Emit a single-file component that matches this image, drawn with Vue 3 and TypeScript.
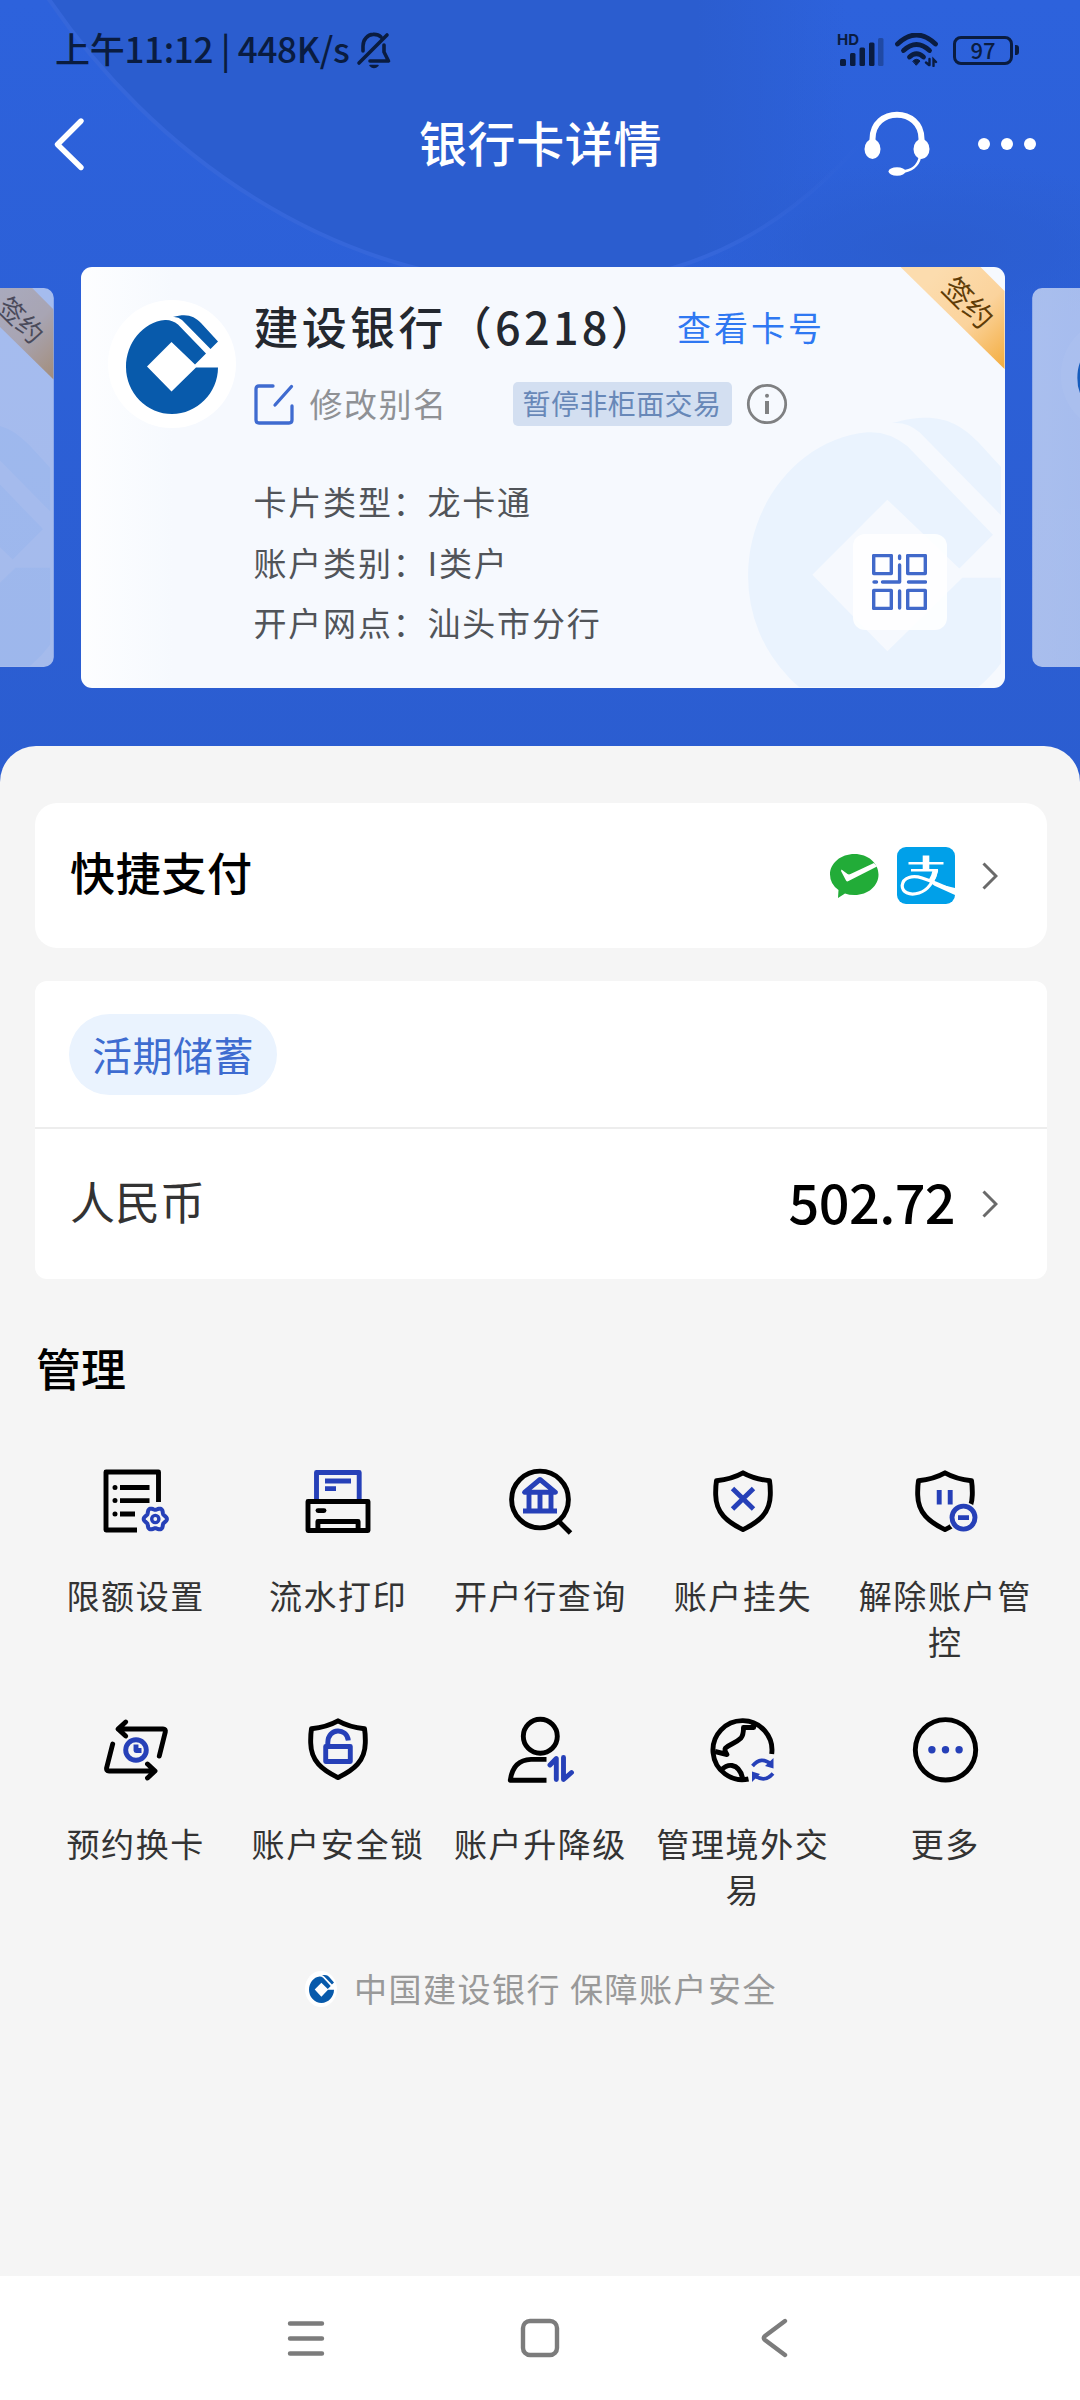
<script setup lang="ts">
interface Field {
  label: string
  value: string
}

interface Action {
  icon: string
  label: string
}

const fields: Field[] = [
  { label: '卡片类型', value: '龙卡通' },
  { label: '账户类别', value: 'I类户' },
  { label: '开户网点', value: '汕头市分行' },
]

const actions: Action[] = [
  { icon: 'limit', label: '限额设置' },
  { icon: 'print', label: '流水打印' },
  { icon: 'branch', label: '开户行查询' },
  { icon: 'loss', label: '账户挂失' },
  { icon: 'release', label: '解除账户管控' },
  { icon: 'renew', label: '预约换卡' },
  { icon: 'lock', label: '账户安全锁' },
  { icon: 'upgrade', label: '账户升降级' },
  { icon: 'overseas', label: '管理境外交易' },
  { icon: 'more', label: '更多' },
]

const logoBody =
  'M219 367.5H197L172.5 391.5L148 366.5L172.5 342L196 364.5L207 353.5L179 324.5Q173 319.6 166 320C144 322 127 343 127 367A46 47 0 0 0 173 414C198 414 219 393 219 367.5Z'
const logoWing = 'M174 317C188 313 195 316 202 323L219 341.5L211.5 349L183 320Q179 316.5 174 317Z'

const shield =
  'M36 7.8Q25 14 9.5 15.7Q8.5 22 8.7 30C9 48 20 57 36 64.6C52 57 63 48 63.3 30Q63.5 22 62.5 15.7Q47 14 36 7.8Z'

function gearPath(cx: number, cy: number): string {
  const points: string[] = []
  for (let i = 0; i < 72; i++) {
    const a = (i * Math.PI) / 36
    const r = 10.4 + 1.2 * Math.cos(6 * a)
    points.push(`${(cx + r * Math.cos(a)).toFixed(2)} ${(cy + r * Math.sin(a)).toFixed(2)}`)
  }
  return `M${points.join('L')}Z`
}
const gear = gearPath(55.3, 54)
</script>

<template>
  <div class="screen">
    <header class="hero">
      <svg class="hero-bg" width="1080" height="790" viewBox="0 0 1080 790">
        <defs>
          <linearGradient id="base" x1="0" y1="0" x2="0" y2="1">
            <stop offset="0" stop-color="#2d62dc" />
            <stop offset="1" stop-color="#2b5dd0" />
          </linearGradient>
          <linearGradient id="disc" x1="0" y1="0" x2="1" y2="0">
            <stop offset="0" stop-color="#2b5dcf" />
            <stop offset="0.78" stop-color="#2b5dcf" />
            <stop offset="0.96" stop-color="#2b5dcf" stop-opacity="0" />
          </linearGradient>
          <linearGradient id="rim" x1="0" y1="0" x2="1" y2="0">
            <stop offset="0" stop-color="#3566da" />
            <stop offset="0.8" stop-color="#3566da" />
            <stop offset="0.98" stop-color="#3566da" stop-opacity="0" />
          </linearGradient>
          <radialGradient id="shade">
            <stop offset="0" stop-color="#2b5dcf" />
            <stop offset="1" stop-color="#2b5dcf" stop-opacity="0" />
          </radialGradient>
        </defs>
        <rect width="1080" height="790" fill="url(#base)" />
        <ellipse cx="930" cy="250" rx="250" ry="90" fill="url(#shade)" />
        <path d="M46 -5C150 150 330 285 550 285C700 285 800 220 880 120V-5Z" fill="url(#disc)" />
        <path d="M46 -5C150 150 330 285 550 285C700 285 800 220 880 120" fill="none" stroke="url(#rim)" stroke-width="4" />
      </svg>

      <div class="status">
        <span class="status-text">上午11:12 | 448K/s</span>
        <svg class="bell" width="36" height="38" viewBox="0 0 36 38" fill="none" stroke="#0a1c40" stroke-width="3.6" stroke-linecap="round" stroke-linejoin="round">
          <path d="M3 32L31 4" />
          <path d="M7 20V15C7 8 12 3.6 17 3.4C20 3.2 23 4 25 6" />
          <path d="M28 14V21L32.500 30H14" />
          <path d="M14 34.500H22Q18 38.500 14 34.500Z" fill="#0a1c40" stroke-width="1.500" />
        </svg>
        <div class="status-right">
          <svg class="signal" width="50" height="34" viewBox="0 0 50 34" fill="#0a1c40">
            <text x="0" y="12" font-size="15" font-weight="700" class="hd">HD</text>
            <rect x="3" y="26" width="6" height="7" rx="1.500" />
            <rect x="13" y="20" width="5.500" height="13" rx="1.500" />
            <rect x="22.500" y="14.500" width="5.500" height="18.500" rx="1.500" />
            <rect x="32" y="9.500" width="5.500" height="23.500" rx="1.500" />
            <rect x="41" y="5" width="5.500" height="28" rx="1.500" opacity="0.35" />
          </svg>
          <svg class="wifi" width="44" height="34" viewBox="0 0 44 34" fill="none" stroke="#0a1c40" stroke-width="4.800" stroke-linecap="round">
            <path d="M2.500 11Q21.500 -7 40.500 11" />
            <path d="M8.500 17.500Q21.500 5.500 34.500 17.500" />
            <path d="M14.500 24Q21.500 17.500 28.500 24" />
            <path d="M18 28Q21.500 24.500 25 28L21.500 32Z" fill="#0a1c40" stroke-width="1" />
            <path d="M34.500 26V32M31 29.500L34 32M38.500 33V26.500L41 29" stroke-width="2.400" />
          </svg>
          <div class="battery"><span>97</span></div>
          <i class="battery-cap"></i>
        </div>
      </div>

      <nav class="titlebar">
        <svg class="back" width="34" height="56" viewBox="0 0 34 56" fill="none" stroke="#fff" stroke-width="5.400" stroke-linecap="round" stroke-linejoin="round">
          <path d="M29 5L5.500 28.500L29 51.500" />
        </svg>
        <h1>银行卡详情</h1>
        <svg class="headset" width="66" height="66" viewBox="0 0 66 66" fill="none" stroke="#fff">
          <path d="M8.500 32V28C8.500 -4.500 57.500 -4.500 57.500 28V32" stroke-width="6" />
          <ellipse cx="8.500" cy="38" rx="8" ry="10" fill="#fff" stroke="none" />
          <ellipse cx="57.500" cy="38" rx="8" ry="10" fill="#fff" stroke="none" />
          <path d="M56 46C54 55 47 60 38 60.500" stroke-width="2.600" />
          <ellipse cx="33" cy="60.500" rx="8.500" ry="4.200" fill="#fff" stroke="none" />
        </svg>
        <svg class="dots" width="60" height="14" viewBox="0 0 60 14" fill="#fff">
          <circle cx="7" cy="7" r="6" /><circle cx="30" cy="7" r="6" /><circle cx="53" cy="7" r="6" />
        </svg>
      </nav>

      <section class="carousel">
        <article class="card side">
          <svg class="watermark" width="253" height="270" viewBox="127 315 82.600 88.200">
            <path :d="logoBody" /><path :d="logoWing" />
          </svg>
          <div class="ribbon"><span>签约</span></div>
        </article>

        <article class="card">
          <svg class="watermark" width="253" height="270" viewBox="127 315 82.600 88.200">
            <path :d="logoBody" /><path :d="logoWing" />
          </svg>
          <div class="ribbon"><span>签约</span></div>
          <div class="avatar">
            <svg width="92" height="99" viewBox="127 315 92 99"><path :d="logoBody" /><path :d="logoWing" /></svg>
          </div>
          <div class="details">
            <div class="name-row">
              <h2>建设银行（6218）</h2>
              <a>查看卡号</a>
            </div>
            <div class="alias-row">
              <svg width="40" height="41" viewBox="0 0 40 41" fill="none" stroke="#3f6bd0" stroke-width="3.300" stroke-linecap="round" stroke-linejoin="round">
                <path d="M19 2H5Q2 2 2 5V36Q2 39 5 39H35Q38 39 38 36V22" />
                <path d="M21 21L37.500 2.500" />
              </svg>
              <span class="alias">修改别名</span>
              <span class="tag">暂停非柜面交易</span>
              <svg class="info" width="42" height="42" viewBox="0 0 42 42" fill="none" stroke="#7f8082">
                <circle cx="21" cy="21" r="18.700" stroke-width="2.800" />
                <path d="M21 18V31" stroke-width="4" />
                <circle cx="21" cy="12.700" r="2" fill="#7f8082" stroke="none" />
              </svg>
            </div>
            <dl>
              <div v-for="f in fields" :key="f.label" class="field">
                <dt>{{ f.label }}：</dt>
                <dd>{{ f.value }}</dd>
              </div>
            </dl>
          </div>
          <div class="qr">
            <svg width="55" height="56" viewBox="0 0 55 56" fill="none" stroke="#4169ca" stroke-width="3.400" stroke-linecap="round" stroke-linejoin="round">
              <rect x="1.700" y="1.600" width="17.600" height="18" />
              <rect x="35.700" y="1.600" width="17.600" height="18" />
              <rect x="1.700" y="36.400" width="17.600" height="18" />
              <rect x="35.700" y="36.400" width="17.600" height="18" />
              <path d="M27.600 2V4.500M27.600 11V28H10.500M2 28H4.500M36.500 28H53.500M27.600 37V54" />
            </svg>
          </div>
        </article>

        <article class="card side">
          <div class="avatar">
            <svg width="92" height="99" viewBox="127 315 92 99"><path :d="logoBody" /><path :d="logoWing" /></svg>
          </div>
        </article>
      </section>
    </header>

    <main class="panel">
      <section class="quick">
        <span>快捷支付</span>
        <div class="pay-icons">
          <svg class="wechat" width="49" height="44" viewBox="0 0 49 44">
            <path d="M24.500 0C38 0 48.500 9 48.500 20.500S38 41 24.500 41Q19 41 15 39.500L8 44L8.500 36Q0 30 0 20.500C0 9 11 0 24.500 0Z" fill="#22ac38" />
            <path d="M11.500 15.500L17.500 20Q19 20.800 20.500 20L44 9L47 12.500L18.500 27Q17 28 16 26.500L11 17Z" fill="#fff" />
          </svg>
          <svg class="alipay" width="58" height="57" viewBox="0 0 58 57">
            <rect width="58" height="57" rx="9" fill="#00a0e9" />
            <g fill="none" stroke="#fff">
              <path d="M11.500 16.200H46.500M14 23.200H41" stroke-width="2.600" />
              <path d="M29 8.500V23" stroke-width="6.600" />
              <path d="M39.500 23Q35 42 22 46C12 49 5 45 5.200 38.500C6 30 16 28 25 31Q36 34.500 58 44.500" stroke-width="3.200" />
              <path d="M38.500 23Q37.500 29 34 34.500" stroke-width="5.500" />
              <path d="M32 33.500Q37 36 41 38L58 42V47L38 38Z" fill="#fff" stroke-width="1.800" />
            </g>
          </svg>
          <svg class="chevron" width="16" height="28" viewBox="0 0 16 28"><path d="M1.500 1.500L14 14L1.500 26.500" /></svg>
        </div>
      </section>

      <section class="account">
        <div class="account-head"><span class="pill">活期储蓄</span></div>
        <div class="account-row">
          <span>人民币</span>
          <strong>502.72</strong>
          <svg class="chevron" width="16" height="28" viewBox="0 0 16 28"><path d="M1.500 1.500L14 14L1.500 26.500" /></svg>
        </div>
      </section>

      <h3>管理</h3>

      <section class="grid">
        <div v-for="a in actions" :key="a.icon" class="action">
          <svg class="glyph" width="72" height="72" viewBox="0 0 72 72">
            <template v-if="a.icon === 'limit'">
              <path d="M58.500 37V7H6V65H37" />
              <path d="M20 22.500H49.500M20 35.600H49.500M20 49H35" />
              <path class="fill" d="M12.500 22.500a2.500 2.500 0 1 0 5 0a2.500 2.500 0 1 0 -5 0M12.500 35.600a2.500 2.500 0 1 0 5 0a2.500 2.500 0 1 0 -5 0M12.500 49a2.500 2.500 0 1 0 5 0a2.500 2.500 0 1 0 -5 0" />
              <path class="blue" stroke-width="4" :d="gear" />
              <circle class="blue" cx="55.300" cy="54" r="3.600" stroke-width="3.400" />
            </template>
            <template v-else-if="a.icon === 'print'">
              <path class="blue" d="M14.500 36V7.500H57.200V36M23 16H49M23 23.600H34" />
              <rect x="6" y="36.500" width="60" height="29" />
              <path d="M15.900 65V56.500H56.100V65" />
              <path d="M16 45.600H22" stroke-linecap="round" />
            </template>
            <template v-else-if="a.icon === 'branch'">
              <circle cx="36" cy="34.500" r="28.400" />
              <path d="M53.500 55L66.500 68" />
              <path class="blue" d="M36 14.500L20.500 27.300H51.500ZM25 29V45M36 29V45M47 29V45M19 46H53" />
            </template>
            <template v-else-if="a.icon === 'loss'">
              <path :d="shield" />
              <path class="blue" d="M25.500 23.500L46.500 44M46.500 23.500L25.500 44" />
            </template>
            <template v-else-if="a.icon === 'release'">
              <path :d="shield" />
              <circle class="mask" cx="54.500" cy="52.600" r="15.500" />
              <path class="blue" d="M30.200 25V39.500M41.200 25V39.500M49 52.600H60" />
              <circle class="blue" cx="54.500" cy="52.600" r="11.500" />
            </template>
            <template v-else-if="a.icon === 'renew'">
              <g stroke-linecap="round">
                <path d="M19 16H63Q66 16 65.300 19L59.300 43M25.700 9L18 16L25.700 23" />
                <path d="M12.700 31L6.700 54.500Q6 58 9 58H54M47.500 51L55 58L47.500 65" />
              </g>
              <circle class="blue" cx="36" cy="37" r="10.300" />
              <path class="blue" d="M36 31.500V37.500H41.500" />
            </template>
            <template v-else-if="a.icon === 'lock'">
              <path :d="shield" />
              <rect class="blue" x="23.700" y="33.500" width="24.600" height="15" />
              <path class="blue" d="M25.800 33V29.500C26 14.500 45 14.500 46.300 27.500" />
            </template>
            <template v-else-if="a.icon === 'upgrade'">
              <circle cx="36.300" cy="23.300" r="17" />
              <path d="M42.500 46.400H27Q9 47 6.300 67.300H42.500" />
              <path class="blue" stroke-linecap="round" d="M46 52L52.300 45.500V66.500M59.500 44.500V66.500L67.500 59.500" />
            </template>
            <template v-else-if="a.icon === 'overseas'">
              <path d="M64.700 41A29.500 29.500 0 1 0 41.500 66" />
              <path d="M46.700 9.500V14.500H36.500Q36.500 22 34 25C29 30 23 31 18.500 35Q17 37 20 41.500L8 38.500" />
              <path d="M14 57Q20 51.500 25 52.500Q33 54 35.600 65" />
              <path class="blue" stroke-width="3.600" d="M45.500 53Q54 42.500 64.500 51.500M66 60.500Q57.500 70.500 47 62" />
              <path class="blue-fill" d="M66.500 45V55.500L58 53ZM45 58.500L53 61L45 69Z" />
            </template>
            <template v-else>
              <circle cx="36.500" cy="36.800" r="30.200" />
              <g class="blue-fill">
                <circle cx="22.900" cy="36.800" r="3.700" /><circle cx="36.500" cy="36.800" r="3.700" /><circle cx="50.100" cy="36.800" r="3.700" />
              </g>
            </template>
          </svg>
          <span>{{ a.label }}</span>
        </div>
      </section>

      <footer class="slogan">
        <i class="mini-logo">
          <svg width="25" height="28" viewBox="127 315 92 99" preserveAspectRatio="none"><path :d="logoBody" /><path :d="logoWing" /></svg>
        </i>
        <span>中国建设银行 保障账户安全</span>
      </footer>
    </main>

    <div class="sysnav">
      <svg width="40" height="40" viewBox="0 0 40 40"><path d="M4 5.500H36M4 20.500H36M4 35.500H36" /></svg>
      <svg width="40" height="40" viewBox="0 0 40 40"><rect x="3" y="3" width="34" height="34" rx="7" /></svg>
      <svg width="40" height="40" viewBox="0 0 40 40"><path d="M31 3L11 18Q8.500 20 11 22L31 37" /></svg>
    </div>
  </div>
</template>

<style>
body {
  margin: 0;
  background: #f5f5f5;
}
</style>

<style scoped>
.screen {
  width: 1080px;
  height: 2400px;
  display: flex;
  flex-direction: column;
  overflow: hidden;
  background: #f5f5f5;
  font-family: 'Noto Sans CJK SC', 'Noto Sans', sans-serif;
  color: #333;
}
h1, h2, h3, dl, dt, dd { margin: 0; font-weight: 500; }
svg { display: block; flex: none; }
.hero { position: relative; height: 746px; flex: none; }
.hero-bg { position: absolute; left: 0; top: 0; }
.status, .titlebar, .carousel { position: relative; display: flex; align-items: center; }
.status { height: 100px; padding: 0 61px 0 55px; box-sizing: border-box; color: #0a1c40; }
.status-text { margin-bottom: 4px; font-size: 35px; line-height: 50px; font-weight: 500; letter-spacing: -0.300px; white-space: nowrap; }
.bell { margin-left: 6px; }
.status-right { margin-left: auto; display: flex; align-items: center; }
.signal { overflow: visible; }
.hd { font-family: 'Inter', sans-serif; }
.wifi { margin-left: 8px; }
.battery {
  width: 54px; height: 23px; margin-left: 14px; border: 3px solid #0a1c40; border-radius: 8px;
  display: flex; align-items: center; justify-content: center; font-size: 22px; font-weight: 500; line-height: 22px;
}
.battery span { margin-top: -3px; }
.battery-cap { width: 4px; height: 10px; margin-left: 2px; border-radius: 0 3px 3px 0; background: #0a1c40; }
.titlebar { height: 88px; padding: 0 43px 0 52px; color: #fff; }
h1 { margin: 0 0 6px 333px; font-size: 48px; line-height: 60px; letter-spacing: 0.600px; }
.headset { margin-left: 202px; }
.dots { margin-left: auto; }

.carousel { margin-top: 79px; height: 421px; justify-content: center; overflow: hidden; padding-left: 4px; }
.card {
  position: relative; flex: none; width: 924px; height: 421px; box-sizing: border-box; overflow: hidden;
  display: flex; border-radius: 11px; background: linear-gradient(90deg, #fdfeff 0, #f6f9fe 10%, #f6f9fe 100%);
  margin: 0 -10px 0 -9px;
}
.side { transform: scale(0.9); opacity: 0.6; }
.watermark { position: absolute; left: 667px; top: 150px; fill: #eaf3fe; }
.ribbon {
  position: absolute; right: 0; top: 0; width: 104px; height: 102px;
  clip-path: polygon(0 0, 80px 0, 104px 24px, 104px 102px);
  background: linear-gradient(135deg, #fcdcae 20%, #fbd39c 60%, #f3ac3d 100%);
}
.ribbon span {
  position: absolute; left: 39px; top: 14px; width: 60px; height: 40px; line-height: 40px; text-align: center;
  font-size: 29px; color: #5f3c07; transform: rotate(45deg);
}
.avatar {
  flex: none; width: 128px; height: 128px; margin: 33px 0 0 27px; border-radius: 50%; background: #fff;
  display: flex; align-items: center; justify-content: center; fill: #085aab;
}
.side .avatar { margin-left: 32px; }
.details { margin-left: 18px; padding-top: 29px; }
.name-row { display: flex; align-items: center; height: 60px; white-space: nowrap; color: #24282f; }
h2 { font-size: 45px; line-height: 60px; letter-spacing: 3.300px; }
.name-row a { margin-left: 18px; font-size: 34px; letter-spacing: 3px; color: #2f78f2; }
.alias-row { display: flex; align-items: center; height: 44px; margin-top: 26px; white-space: nowrap; }
.alias { margin: 0 0 2px 16px; font-size: 33px; letter-spacing: 1.500px; line-height: 44px; color: #8f9195; }
.tag {
  margin-left: 65px; width: 219px; height: 44px; border-radius: 5px; background: #d3dff1; color: #6888b8;
  text-align: center; font-size: 28px; line-height: 42px; letter-spacing: 0.400px;
}
.info { margin-left: 14px; }
dl { margin-top: 45px; }
.field { display: flex; height: 60.500px; align-items: center; font-size: 33px; letter-spacing: 1.800px; color: #515459; }
dt, dd { font-weight: 400; }
.qr {
  position: absolute; left: 772px; top: 267px; width: 94px; height: 96px; border-radius: 12px;
  background: rgba(255, 255, 255, 0.85); display: flex; align-items: center; justify-content: center;
}

.panel {
  position: relative; height: 1530px; flex: none; box-sizing: border-box; padding: 57px 33px 0 35px; border-radius: 36px 36px 0 0;
  background: #f5f5f5;
}
.quick {
  height: 145px; border-radius: 22px; background: #fff; display: flex; align-items: center; justify-content: space-between;
  padding: 0 49px 0 35px; color: #000; font-size: 45px; font-weight: 500; letter-spacing: 0.700px;
}
.quick > span { margin-top: -8px; }
.pay-icons { display: flex; align-items: center; }
.alipay { margin-left: 18px; }
.chevron { margin-left: 27px; fill: none; stroke: #6a6a6a; stroke-width: 3; }
.account { margin-top: 33px; height: 298px; border-radius: 12px; background: #fff; }
.account-head { height: 146px; display: flex; align-items: center; padding-left: 34px; border-bottom: 2px solid #ededed; }
.pill {
  width: 208px; height: 81px; border-radius: 41px; background: #eaf3fe; color: #3e6cd0; text-align: center;
  font-size: 40px; line-height: 80px; letter-spacing: 0.500px;
}
.account-row { height: 150px; display: flex; align-items: center; padding: 0 49px 0 35px; font-size: 45px; }
.account-row span { margin-bottom: 8px; }
.account-row strong { margin: 0 0 8px auto; font-size: 54px; font-weight: 500; color: #000; letter-spacing: -0.600px; }
h3 { margin: 59px 0 0 1px; font-size: 45px; line-height: 60px; color: #000; }
.grid { margin: 67px 0 0 -0.500px; display: grid; grid-template-columns: repeat(5, 202.400px); grid-auto-rows: 248px; }
.action { display: flex; flex-direction: column; align-items: center; }
.action span { width: 174px; margin-top: 35px; text-align: center; font-size: 33px; line-height: 46px; letter-spacing: 1.600px; }
.glyph { fill: none; stroke: #000; stroke-width: 4.900; stroke-linejoin: round; }
.glyph .blue { stroke: #2640b8; }
.glyph .fill { fill: #000; stroke: none; }
.glyph .blue-fill { fill: #2640b8; stroke: none; }
.glyph .mask { fill: #f5f5f5; stroke: none; }
.slogan { margin-top: 4px; display: flex; align-items: center; padding-left: 270px; height: 46px; color: #999; font-size: 33px; letter-spacing: 1.500px; white-space: nowrap; }
.mini-logo { width: 32px; height: 36px; margin-top: 2px; border-radius: 50%; background: #fff; display: flex; align-items: center; justify-content: center; fill: #085aab; }
.slogan span { margin: 0 0 1px 17px; }

.sysnav { flex: none; height: 124px; background: #fff; display: flex; align-items: center; justify-content: center; gap: 194px; }
.sysnav svg { fill: none; stroke: #7c7c7c; stroke-width: 4.400; stroke-linecap: round; }
</style>
